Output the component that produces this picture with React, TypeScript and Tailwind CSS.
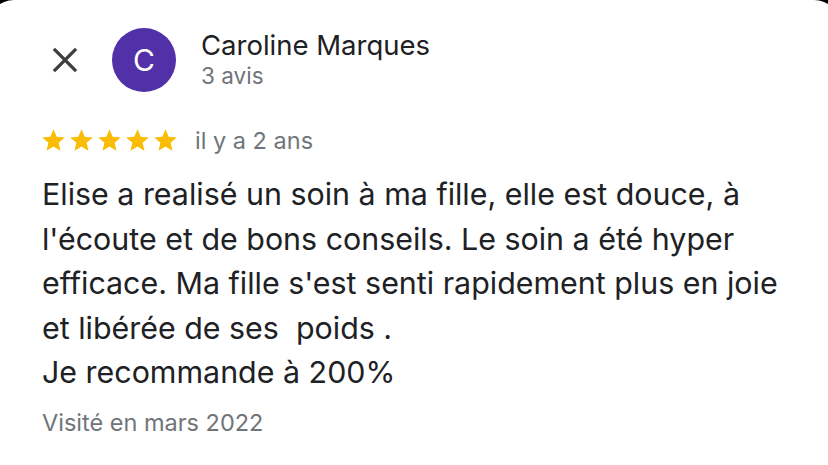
import React from "react";

const font = { fontFamily: "Inter, 'Noto Sans', Arial, sans-serif" };

function Star() {
  return (
    <svg viewBox="0 0 24 24" className="h-[27px] w-[27px]" fill="#fbbc04">
      <path d="M12 17.27 18.18 21l-1.64-7.03L22 9.24l-7.19-.61L12 2 9.19 8.63 2 9.24l5.46 4.73L5.82 21z" />
    </svg>
  );
}

export default function App() {
  return (
    <div className="h-[465px] w-[828px] overflow-hidden bg-black" style={font}>
      <div className="ml-[-12px] h-[480px] w-[852px] rounded-t-[26px] bg-white pl-[12px]">
        {/* header */}
        <div className="flex items-center pt-[28px]">
          <div className="flex w-[112px] items-center justify-center">
            <svg viewBox="0 0 24 24" className="ml-[18px] h-[38px] w-[38px]" stroke="#3c4043" strokeWidth="2.1" strokeLinecap="butt">
              <path d="M5 5l14 14M19 5L5 19" />
            </svg>
          </div>
          <div className="flex h-[64px] w-[64px] items-center justify-center rounded-full bg-[#5230a8] text-[30px] text-white">
            C
          </div>
          <div className="ml-[25px] flex flex-col pb-[2px]">
            <span className="text-[27.5px] leading-[32px] text-[#202124]">Caroline Marques</span>
            <span className="mt-[1px] text-[22.5px] leading-[28px] text-[#70757a]">3 avis</span>
          </div>
        </div>

        {/* rating */}
        <div className="mt-[31px] flex items-center pl-[40px]">
          <div className="flex gap-[1px]">
            <Star />
            <Star />
            <Star />
            <Star />
            <Star />
          </div>
          <span className="ml-[16px] text-[23.5px] text-[#70757a]">il y a 2 ans</span>
        </div>

        {/* body */}
        <p className="mt-[14px] pl-[42px] text-[30.4px] leading-[44.5px] text-[#202124]">
          Elise a realisé un soin à ma fille, elle est douce, à
          <br />
          l'écoute et de bons conseils. Le soin a été hyper
          <br />
          efficace. Ma fille s'est senti rapidement plus en joie
          <br />
          {"et libérée de ses\u00a0 poids ."}
          <br />
          Je recommande à 200%
        </p>

        <p className="mt-[10px] pl-[42px] text-[23.5px] text-[#70757a]">Visité en mars 2022</p>
      </div>
    </div>
  );
}
